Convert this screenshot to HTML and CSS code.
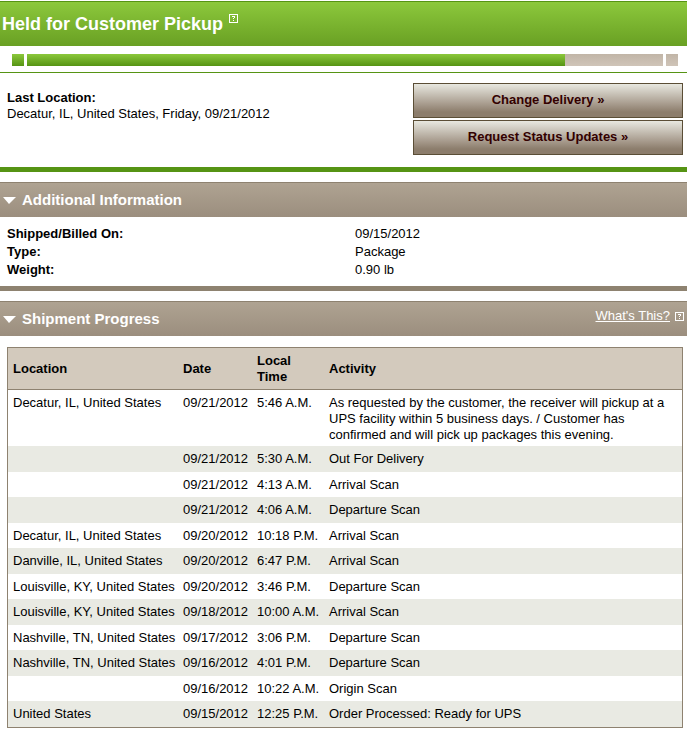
FILE: index.html
```html
<!DOCTYPE html>
<html lang="en">
<head>
  <meta charset="UTF-8">
  <meta name="viewport" content="width=device-width, initial-scale=1.0">
  <title>Tracking Detail</title>
  <link rel="stylesheet" href="styles.css">
</head>
<body>
  <div class="status-bar">
    <h1>Held for Customer Pickup</h1>
    <a href="#" class="help" aria-label="Help">
      <svg width="9" height="9" viewBox="0 0 9 9" shape-rendering="crispEdges">
        <path fill="#fff" d="M0 0h9v9H0zM1 1v7h7V1z" fill-rule="evenodd"/>
        <path fill="#fff" d="M3 2h3v1H3zM5 3h1v1H5zM4 4h1v1H4zM4 6h1v1H4z"/>
      </svg>
    </a>
  </div>

  <div class="progress">
    <div class="step done"></div>
    <div class="track">
      <div class="fill" style="width: 84.6%"></div>
    </div>
    <div class="step"></div>
  </div>

  <div class="summary">
    <div class="last-location">
      <strong>Last Location:</strong><br>
      Decatur, IL, United States, Friday, 09/21/2012
    </div>
    <div class="actions">
      <button type="button">Change Delivery »</button>
      <button type="button">Request Status Updates »</button>
    </div>
  </div>

  <div class="section-header">
    <span class="arrow"></span>
    <h2>Additional Information</h2>
  </div>
  <dl class="info">
    <dt>Shipped/Billed On:</dt>
    <dd>09/15/2012</dd>
    <dt>Type:</dt>
    <dd>Package</dd>
    <dt>Weight:</dt>
    <dd>0.90 lb</dd>
  </dl>

  <div class="section-header">
    <span class="arrow"></span>
    <h2>Shipment Progress</h2>
    <div class="whats-this">
      <a href="#">What's This?</a>
      <svg width="9" height="9" viewBox="0 0 9 9" shape-rendering="crispEdges">
        <path fill="#fff" d="M0 0h9v9H0zM1 1v7h7V1z" fill-rule="evenodd"/>
        <path fill="#fff" d="M3 2h3v1H3zM5 3h1v1H5zM4 4h1v1H4zM4 6h1v1H4z"/>
      </svg>
    </div>
  </div>
  <div class="table-box">
    <table>
      <thead>
        <tr>
          <th class="col-location">Location</th>
          <th class="col-date">Date</th>
          <th class="col-time">Local<br>Time</th>
          <th>Activity</th>
        </tr>
      </thead>
      <tbody>
        <tr>
          <td>Decatur, IL, United States</td>
          <td>09/21/2012</td>
          <td>5:46 A.M.</td>
          <td>As requested by the customer, the receiver will pickup at a UPS facility within 5 business days. / Customer has confirmed and will pick up packages this evening.</td>
        </tr>
        <tr>
          <td></td>
          <td>09/21/2012</td>
          <td>5:30 A.M.</td>
          <td>Out For Delivery</td>
        </tr>
        <tr>
          <td></td>
          <td>09/21/2012</td>
          <td>4:13 A.M.</td>
          <td>Arrival Scan</td>
        </tr>
        <tr>
          <td></td>
          <td>09/21/2012</td>
          <td>4:06 A.M.</td>
          <td>Departure Scan</td>
        </tr>
        <tr>
          <td>Decatur, IL, United States</td>
          <td>09/20/2012</td>
          <td>10:18 P.M.</td>
          <td>Arrival Scan</td>
        </tr>
        <tr>
          <td>Danville, IL, United States</td>
          <td>09/20/2012</td>
          <td>6:47 P.M.</td>
          <td>Arrival Scan</td>
        </tr>
        <tr>
          <td>Louisville, KY, United States</td>
          <td>09/20/2012</td>
          <td>3:46 P.M.</td>
          <td>Departure Scan</td>
        </tr>
        <tr>
          <td>Louisville, KY, United States</td>
          <td>09/18/2012</td>
          <td>10:00 A.M.</td>
          <td>Arrival Scan</td>
        </tr>
        <tr>
          <td>Nashville, TN, United States</td>
          <td>09/17/2012</td>
          <td>3:06 P.M.</td>
          <td>Departure Scan</td>
        </tr>
        <tr>
          <td>Nashville, TN, United States</td>
          <td>09/16/2012</td>
          <td>4:01 P.M.</td>
          <td>Departure Scan</td>
        </tr>
        <tr>
          <td></td>
          <td>09/16/2012</td>
          <td>10:22 A.M.</td>
          <td>Origin Scan</td>
        </tr>
        <tr>
          <td>United States</td>
          <td>09/15/2012</td>
          <td>12:25 P.M.</td>
          <td>Order Processed: Ready for UPS</td>
        </tr>
      </tbody>
    </table>
  </div>
</body>
</html>
```
FILE: styles.css
```css
* {
    box-sizing: border-box;
}

body {
    margin: 0;
    padding-top: 1px;
    background: #fff;
    color: #000;
    font-family: "Liberation Sans", Arial, sans-serif;
    font-size: 13px;
    line-height: 16px;
}

h1, h2 {
    margin: 0;
    color: #fff;
}

h1 {
    font-size: 18px;
    line-height: 20px;
}

h2 {
    font-size: 15px;
    line-height: 20px;
}

svg {
    display: block;
}

.status-bar {
    display: flex;
    align-items: flex-start;
    gap: 6px;
    height: 45px;
    padding: 12px 2px 0;
    border-top: 1px solid #569414;
    background: linear-gradient(#8cc83c, #69a023);
}

.progress {
    display: flex;
    gap: 3px;
    padding: 8px 9px 6px 12px;
    border-bottom: 1px solid #569414;
}

.step {
    width: 12px;
    height: 12px;
    background: linear-gradient(#c1b5a7, #cfc4b8);
}

.track {
    flex: 1;
    background: linear-gradient(#c1b5a7, #cfc4b8);
}

.fill, .step.done {
    height: 12px;
    background: linear-gradient(#8cc83c, #569414);
}

.summary {
    display: flex;
    justify-content: space-between;
    padding: 10px 4px 12px 7px;
    border-bottom: 5px solid #569414;
}

.last-location {
    padding-top: 7px;
}

.actions {
    display: flex;
    flex-direction: column;
    gap: 2px;
    width: 270px;
}

.actions button {
    height: 35px;
    padding: 0 0 2px;
    border: 1px solid #5b4e36;
    background: linear-gradient(#e8e8e0, #a89c8e 60%, #8c7d6c 85%);
    color: #300;
    font: bold 13px "Liberation Sans", Arial, sans-serif;
    cursor: pointer;
}

.section-header {
    display: flex;
    align-items: center;
    gap: 6px;
    height: 35px;
    margin-top: 10px;
    padding: 0 3px;
    border-top: 1px solid #8e8270;
    background: linear-gradient(#afa392, #9b8e7e);
}

.arrow {
    border: solid transparent;
    border-width: 7px 7px 0 6px;
    border-top-color: #fff;
}

.whats-this {
    display: flex;
    align-items: center;
    gap: 5px;
    margin-left: auto;
    padding-bottom: 6px;
}

.whats-this a {
    color: #fff;
}

.info {
    display: grid;
    grid-template-columns: 348px 1fr;
    row-gap: 2px;
    margin: 0;
    padding: 9px 7px 8px;
    border-bottom: 5px solid #8e8270;
}

.info dt {
    font-weight: bold;
}

.info dd {
    margin: 0;
}

.table-box {
    padding: 11px 4px 5px 7px;
}

table {
    width: 100%;
    border: 1px solid #8e8270;
    border-spacing: 0;
    table-layout: fixed;
}

th, td {
    padding: 5px 0 4px 5px;
    text-align: left;
    vertical-align: top;
}

th {
    height: 42px;
    border-bottom: 1px solid #8e8270;
    background: #d3cabd;
    vertical-align: middle;
}

td:last-child {
    padding-right: 16px;
}

tbody tr:first-child td {
    padding-bottom: 3px;
}

tbody tr:nth-child(even) td {
    padding-bottom: 5px;
    background: #e9eae3;
}

.col-location {
    width: 170px;
}

.col-date {
    width: 74px;
}

.col-time {
    width: 72px;
}
```
